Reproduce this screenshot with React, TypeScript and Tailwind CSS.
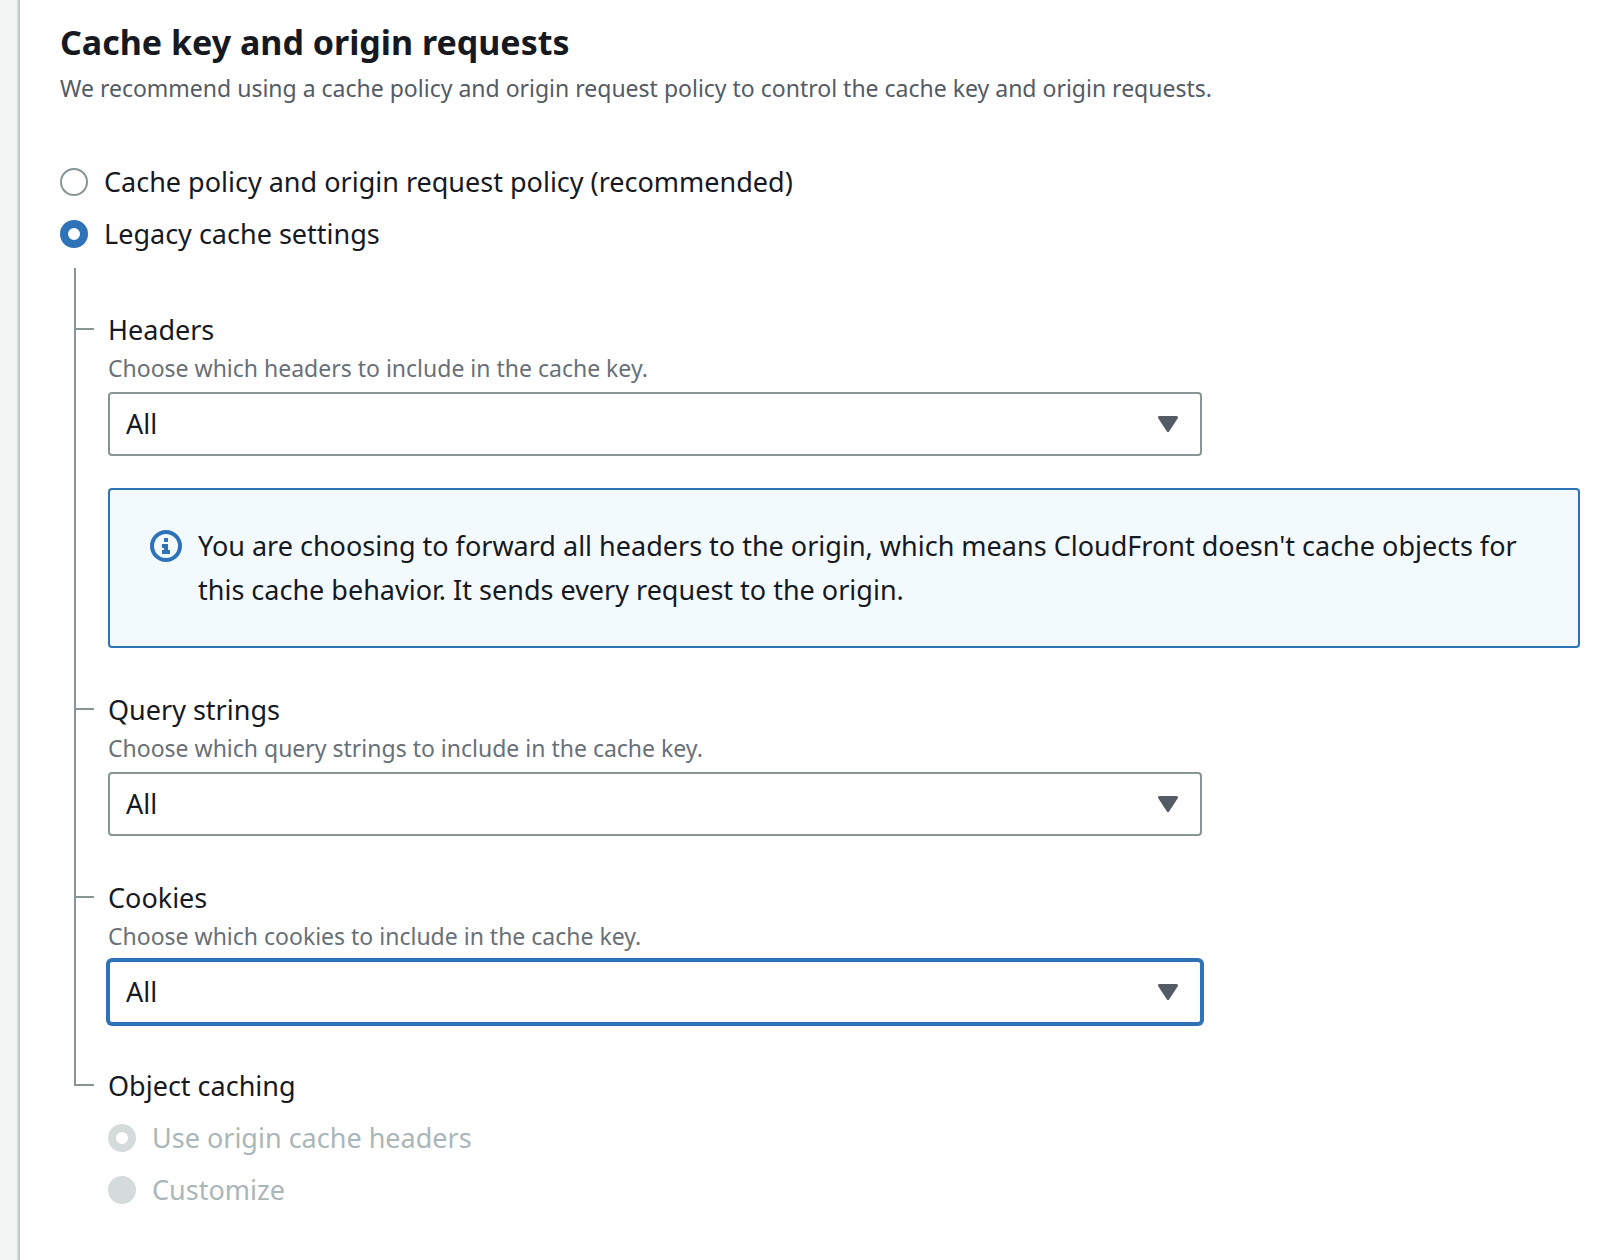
import { useId, useState } from "react";

type SelectFieldProps = {
  label: string;
  description: string;
  options: string[];
  autoFocus?: boolean;
};

/** Short horizontal line that joins a field's label to the tree line. */
function Branch() {
  return <span aria-hidden="true" className="absolute top-5 -left-8 h-0.5 w-[18px] bg-[#879596]" />;
}

function SelectField({ label, description, options, autoFocus }: SelectFieldProps) {
  const id = useId();
  return (
    <div className="relative">
      <Branch />
      <label htmlFor={id} className="block text-[27px] leading-[44px]">
        {label}
      </label>
      <p id={`${id}-description`} className="pb-2 text-[23px] leading-8 text-[#687078]">
        {description}
      </p>
      <div className="w-3/4 pr-2.5">
        <div className="relative">
          <select
            id={id}
            aria-describedby={`${id}-description`}
            autoFocus={autoFocus}
            className="block h-16 w-full appearance-none rounded-[4px] border-2 border-[#879596] bg-white px-4 text-[27px] outline-none focus:border-[#2e73b8] focus:ring-2 focus:ring-[#2e73b8]"
          >
            {options.map((option) => (
              <option key={option}>{option}</option>
            ))}
          </select>
          <svg
            aria-hidden="true"
            viewBox="0 0 20 16"
            className="pointer-events-none absolute top-6 right-6 h-4 w-5"
          >
            <path d="M1.5 1.5h17L10 14.5z" fill="#545b64" stroke="#545b64" strokeWidth="3" strokeLinejoin="round" />
          </svg>
        </div>
      </div>
    </div>
  );
}

type RadioProps = {
  name: string;
  label: string;
  checked: boolean;
  disabled?: boolean;
  onChange?: () => void;
};

function Radio({ name, label, checked, disabled, onChange }: RadioProps) {
  return (
    <label className="flex items-center gap-4 text-[27px] leading-[44px] has-disabled:text-[#aab7b8]">
      <input
        type="radio"
        name={name}
        checked={checked}
        disabled={disabled}
        onChange={() => onChange?.()}
        className="size-7 shrink-0 appearance-none rounded-full border-2 border-[#879596] bg-white checked:border-8 checked:border-[#2e73b8] disabled:border-[#d5dbdb] disabled:bg-[#d5dbdb] disabled:checked:border-[#d5dbdb] disabled:checked:bg-white"
      />
      {label}
    </label>
  );
}

function InfoIcon() {
  return (
    <svg aria-hidden="true" viewBox="0 0 32 32" className="mt-1.5 size-8 shrink-0">
      <circle cx="16" cy="16" r="14" fill="none" stroke="#2e73b8" strokeWidth="4" />
      <path d="M14 8h4v4h-4zM12 14h6v6h2v4h-8v-4h2v-2h-2z" fill="#2e73b8" />
    </svg>
  );
}

export default function App() {
  const [policy, setPolicy] = useState("legacy");

  return (
    <div className="min-h-screen bg-[#f2f3f3] pl-[18px] font-['Noto_Sans','Open_Sans',sans-serif] font-[450] text-[#16191f]">
      <main className="min-h-screen border-l-2 border-[#c4c9c9] bg-white pt-5 pr-[26px] pb-12 pl-10 shadow-[-1px_0_1px_#dfe2e2]">
        <h1 id="cache-heading" className="text-[34px] leading-[44px] font-bold">
          Cache key and origin requests
        </h1>
        <p className="pt-1 text-[23px] leading-10 text-[#545b64]">
          We recommend using a cache policy and origin request policy to control the cache key and origin requests.
        </p>

        <div role="radiogroup" aria-labelledby="cache-heading" className="flex flex-col gap-2 pt-[52px]">
          <Radio
            name="policy"
            label="Cache policy and origin request policy (recommended)"
            checked={policy === "recommended"}
            onChange={() => setPolicy("recommended")}
          />
          <Radio
            name="policy"
            label="Legacy cache settings"
            checked={policy === "legacy"}
            onChange={() => setPolicy("legacy")}
          />
        </div>

        <div className="mt-3 ml-3.5">
          <div className="flex flex-col gap-10 border-l-2 border-[#879596] pt-10 pb-10 pl-8">
            <SelectField
              label="Headers"
              description="Choose which headers to include in the cache key."
              options={["All", "None", "Include the following headers"]}
            />

            <div
              role="status"
              className="-mt-2 flex gap-4 rounded-[4px] border-2 border-[#2e73b8] bg-[#f2fafd] py-[34px] pr-10 pl-10"
            >
              <InfoIcon />
              <p className="text-[27px] leading-[44px]">
                You are choosing to forward all headers to the origin, which means CloudFront doesn't cache objects for
                this cache behavior. It sends every request to the origin.
              </p>
            </div>

            <SelectField
              label="Query strings"
              description="Choose which query strings to include in the cache key."
              options={["All", "None", "Include specified query strings"]}
            />
            <SelectField
              label="Cookies"
              description="Choose which cookies to include in the cache key."
              options={["All", "None", "Include specified cookies"]}
              autoFocus
            />
          </div>

          <div className="flex gap-3.5">
            <span aria-hidden="true" className="h-[22px] w-5 border-b-2 border-l-2 border-[#879596]" />
            <div role="radiogroup" aria-labelledby="object-caching">
              <p id="object-caching" className="text-[27px] leading-[44px]">
                Object caching
              </p>
              <div className="flex flex-col gap-2 pt-2">
                <Radio name="caching" label="Use origin cache headers" checked disabled />
                <Radio name="caching" label="Customize" checked={false} disabled />
              </div>
            </div>
          </div>
        </div>
      </main>
    </div>
  );
}
